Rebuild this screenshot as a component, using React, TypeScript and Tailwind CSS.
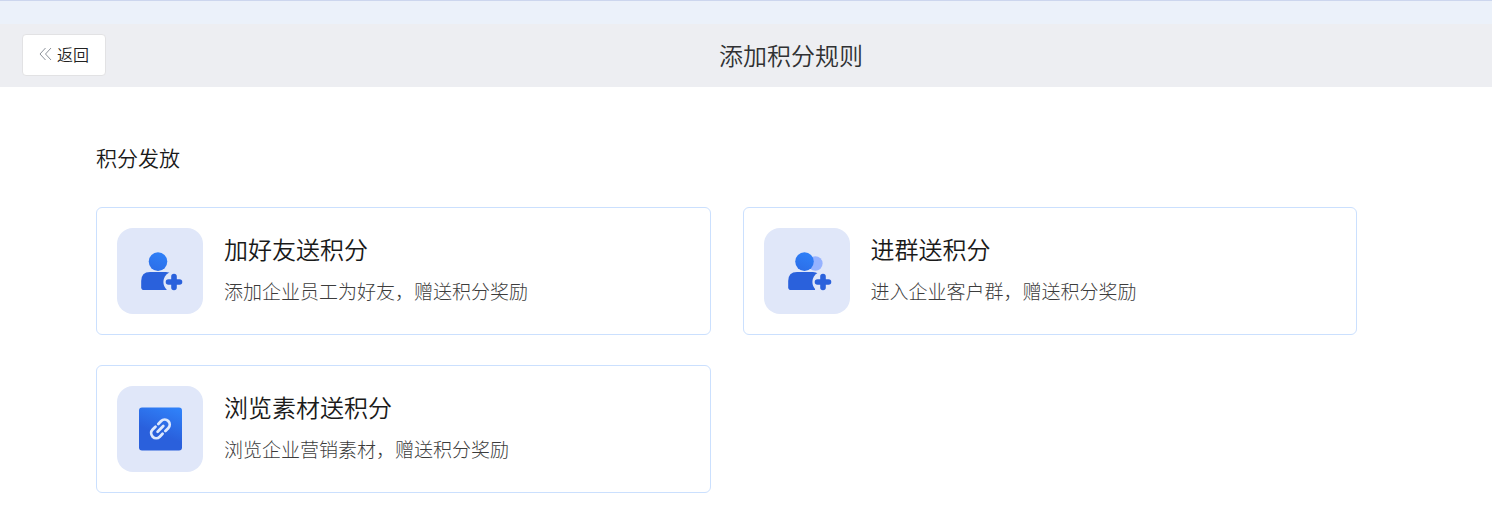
import React, { useId } from "react";

type Rule = { title: string; description: string; icon: React.ReactNode };

function MemberIcon({ group = false }: { group?: boolean }) {
  const id = useId();
  const plusX = group ? 38 : 36;
  return (
    <svg viewBox="0 0 44 44" className="size-11 overflow-visible" aria-hidden="true">
      <defs>
        <linearGradient id={id} x1="0.7" y1="0" x2="0.3" y2="1">
          <stop offset="0" stopColor="#2f80f8" />
          <stop offset="1" stopColor="#2c6ee8" />
        </linearGradient>
      </defs>
      {group && <circle cx="30.3" cy="14.5" r="7.3" fill="#96b2ff" />}
      <circle cx={group ? 19.5 : 20} cy="12.6" r="9.3" fill={`url(#${id})`} />
      <path
        d="M12 23H28Q31 23 33 24.5L30 41H6Q3.200 41 3.200 38.200V32Q3.200 23 12 23Z"
        fill="#2a61dc"
      />
      <circle cx={plusX} cy="33" r="10.6" fill="#e0e7f9" />
      <path
        d={`M${plusX} 27.5V38.5M${plusX - 5.5} 33H${plusX + 5.5}`}
        stroke="#2a61dc"
        strokeWidth="5.6"
        strokeLinecap="round"
      />
    </svg>
  );
}

function LinkIcon() {
  const id = useId();
  return (
    <svg viewBox="0 0 44 44" className="size-11" aria-hidden="true">
      <defs>
        <linearGradient id={id} x1="0.75" y1="0" x2="0.4" y2="0.9">
          <stop offset="0" stopColor="#2f80f8" />
          <stop offset="0.7" stopColor="#2a60dc" />
        </linearGradient>
      </defs>
      <rect x="1" y="0.5" width="43" height="43" rx="3" fill={`url(#${id})`} />
      <g transform="rotate(-45 22.3 22)" fill="none" stroke="#dce8fd" strokeWidth="2.8" strokeLinecap="round">
        <path d="M20.5 17H16.5a5 5 0 0 0 0 10H20.5" />
        <path d="M24.5 17H28.5a5 5 0 0 1 0 10H24.5" />
        <path d="M18.5 22H26.5" />
      </g>
    </svg>
  );
}

const rules: Rule[] = [
  { title: "加好友送积分", description: "添加企业员工为好友，赠送积分奖励", icon: <MemberIcon /> },
  { title: "进群送积分", description: "进入企业客户群，赠送积分奖励", icon: <MemberIcon group /> },
  { title: "浏览素材送积分", description: "浏览企业营销素材，赠送积分奖励", icon: <LinkIcon /> },
];

function RuleCard({ title, description, icon }: Rule) {
  return (
    <li>
      <a href="#" className="flex gap-[21px] rounded-md border border-[#cbe0fe] bg-white p-5">
        <span className="flex size-[86px] shrink-0 items-center justify-center rounded-2xl bg-[#e0e7f9]">
          {icon}
        </span>
        <span className="flex flex-col gap-2 pt-[3px]">
          <span className="text-2xl leading-9 text-[#1a1a1a]">{title}</span>
          <span className="text-[19px] leading-8 font-light text-[#3c3c3c]">{description}</span>
        </span>
      </a>
    </li>
  );
}

export default function App() {
  return (
    <div className="min-h-screen bg-white font-['Noto_Sans_CJK_SC',sans-serif] font-[350]">
      <div className="h-6 border-t border-[#ccd6ee] bg-[#ebf1fa]" />
      <header className="flex items-center bg-[#edeef2] pt-2.5 pr-4 pb-[11px] pl-[22px]">
        <button className="flex h-[42px] items-center gap-1 rounded border border-[#e2e2e4] bg-white px-4 pb-0.5 text-base text-[#222222]">
          <svg viewBox="0 0 14 14" className="size-3.5 fill-none stroke-[#8d939c]" aria-hidden="true">
            <path d="M6.5 1L1 7L6.5 13M12 1L6.5 7L12 13" />
          </svg>
          返回
        </button>
        <h1 className="flex-1 text-center text-2xl text-[#303133]">添加积分规则</h1>
      </header>
      <main className="pt-[54px] pr-[135px] pb-8 pl-24">
        <h2 className="text-[21px] leading-8 text-[#1a1a1a]">积分发放</h2>
        <ul className="mt-[34px] grid grid-cols-2 gap-x-8 gap-y-[30px]">
          {rules.map((rule) => (
            <RuleCard key={rule.title} {...rule} />
          ))}
        </ul>
      </main>
    </div>
  );
}
